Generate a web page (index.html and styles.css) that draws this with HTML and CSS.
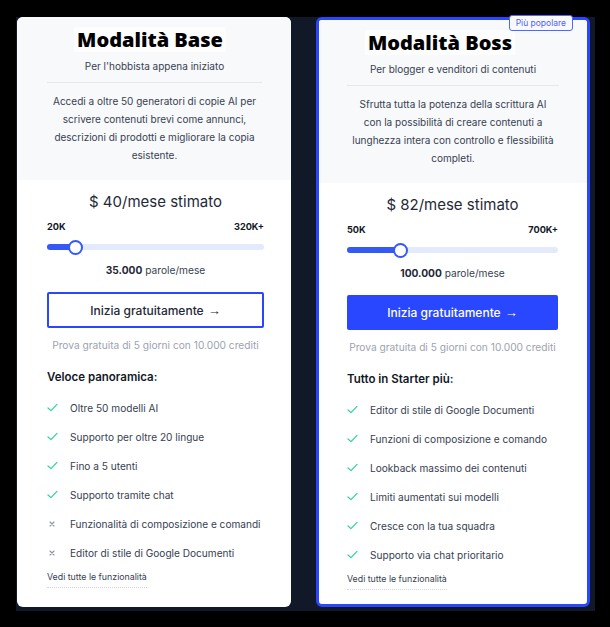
FILE: index.html
```html
<!DOCTYPE html>
<html lang="it">
<head>
<meta charset="utf-8">
<title>Piani</title>
<link rel="stylesheet" href="styles.css">
</head>
<body>
<div class="frame">
  <section class="card">
    <div class="card-head">
      <h2 class="title title-base"><span>Modalità Base</span></h2>
      <p class="subtitle">Per l'hobbista appena iniziato</p>
      <hr class="divider">
      <p class="desc">Accedi a oltre 50 generatori di copie AI per<br>scrivere contenuti brevi come annunci,<br>descrizioni di prodotti e migliorare la copia<br>esistente.</p>
    </div>
    <div class="card-body">
      <p class="price">$ 40/mese stimato</p>
      <div class="range-labels"><span>20K</span><span>320K+</span></div>
      <div class="slider">
        <div class="track"><div class="fill" style="width:28px"></div><div class="thumb" style="left:28px"></div></div>
      </div>
      <p class="words"><b>35.000</b> parole/mese</p>
      <a class="btn btn-outline" href="#">Inizia gratuitamente <span class="arrow">→</span></a>
      <p class="trial">Prova gratuita di 5 giorni con 10.000 crediti</p>
      <h3 class="list-title">Veloce panoramica:</h3>
      <ul class="features">
        <li><span class="ic check"><svg viewBox="0 0 12 10"><polyline points="1,5.5 4.3,8.5 11,1.5"/></svg></span>Oltre 50 modelli AI</li>
        <li><span class="ic check"><svg viewBox="0 0 12 10"><polyline points="1,5.5 4.3,8.5 11,1.5"/></svg></span>Supporto per oltre 20 lingue</li>
        <li><span class="ic check"><svg viewBox="0 0 12 10"><polyline points="1,5.5 4.3,8.5 11,1.5"/></svg></span>Fino a 5 utenti</li>
        <li><span class="ic check"><svg viewBox="0 0 12 10"><polyline points="1,5.5 4.3,8.5 11,1.5"/></svg></span>Supporto tramite chat</li>
        <li><span class="ic cross"><svg viewBox="0 0 10 10"><path d="M3,3 L7,7 M7,3 L3,7"/></svg></span>Funzionalità di composizione e comandi</li>
        <li><span class="ic cross"><svg viewBox="0 0 10 10"><path d="M3,3 L7,7 M7,3 L3,7"/></svg></span>Editor di stile di Google Documenti</li>
      </ul>
      <a class="more" href="#">Vedi tutte le funzionalità</a>
    </div>
  </section>

  <section class="card card-featured">
    <span class="badge">Più popolare</span>
    <div class="card-head">
      <h2 class="title title-boss"><span>Modalità Boss</span></h2>
      <p class="subtitle">Per blogger e venditori di contenuti</p>
      <hr class="divider">
      <p class="desc">Sfrutta tutta la potenza della scrittura AI<br>con la possibilità di creare contenuti a<br>lunghezza intera con controllo e flessibilità<br>completi.</p>
    </div>
    <div class="card-body">
      <p class="price">$ 82/mese stimato</p>
      <div class="range-labels"><span>50K</span><span>700K+</span></div>
      <div class="slider">
        <div class="track"><div class="fill" style="width:53px"></div><div class="thumb" style="left:53px"></div></div>
      </div>
      <p class="words"><b>100.000</b> parole/mese</p>
      <a class="btn btn-solid" href="#">Inizia gratuitamente <span class="arrow">→</span></a>
      <p class="trial">Prova gratuita di 5 giorni con 10.000 crediti</p>
      <h3 class="list-title">Tutto in Starter più:</h3>
      <ul class="features">
        <li><span class="ic check"><svg viewBox="0 0 12 10"><polyline points="1,5.5 4.3,8.5 11,1.5"/></svg></span>Editor di stile di Google Documenti</li>
        <li><span class="ic check"><svg viewBox="0 0 12 10"><polyline points="1,5.5 4.3,8.5 11,1.5"/></svg></span>Funzioni di composizione e comando</li>
        <li><span class="ic check"><svg viewBox="0 0 12 10"><polyline points="1,5.5 4.3,8.5 11,1.5"/></svg></span>Lookback massimo dei contenuti</li>
        <li><span class="ic check"><svg viewBox="0 0 12 10"><polyline points="1,5.5 4.3,8.5 11,1.5"/></svg></span>Limiti aumentati sui modelli</li>
        <li><span class="ic check"><svg viewBox="0 0 12 10"><polyline points="1,5.5 4.3,8.5 11,1.5"/></svg></span>Cresce con la tua squadra</li>
        <li><span class="ic check"><svg viewBox="0 0 12 10"><polyline points="1,5.5 4.3,8.5 11,1.5"/></svg></span>Supporto via chat prioritario</li>
      </ul>
      <a class="more" href="#">Vedi tutte le funzionalità</a>
    </div>
  </section>
</div>
</body>
</html>
```

FILE: styles.css
```css
* { box-sizing: border-box; }
html, body { margin: 0; padding: 0; }
body {
  background: #000;
  font-family: Inter, "Liberation Sans", sans-serif;
  color: #1f2937;
  width: 610px;
  height: 627px;
  overflow: hidden;
}
p, h2, h3, ul { margin: 0; padding: 0; }

.frame {
  margin: 17px 0 0 16px;
  width: 579px;
  height: 594px;
  background: #111827;
  padding: 0 5px 4px 1px;
  display: flex;
  gap: 25px;
  align-items: stretch;
}

.card {
  position: relative;
  width: 274px;
  background: #fff;
  border-radius: 6px;
  display: flex;
  flex-direction: column;
  overflow: visible;
}
.card-featured {
  border: 3px solid #2947ff;
}

.card-head {
  background: #f8f9fb;
  border-radius: 6px 6px 0 0;
  padding: 10px 29px 16px 30px;
  text-align: center;
}
.card-featured .card-head { padding: 10px 28px 16px 28px; border-radius: 3px 3px 0 0; }

.title {
  font-family: "Open Sans", sans-serif;
  font-weight: 800;
  font-size: 20px;
  line-height: 25px;
  color: #000;
}
.title span {
  display: inline-block;
  background: #fdfdfe;
  padding: 0 3px;
}
.title-base { margin-right: 9px; }
.title-boss { margin-right: 26px; }

.subtitle {
  margin-top: 6px;
  font-size: 10px;
  line-height: 16px;
  color: #374151;
}
.divider {
  margin: 8px 0 0;
  border: 0;
  height: 1px;
  background: #e5e7eb;
}
.desc {
  margin-top: 9px;
  font-size: 10px;
  line-height: 18px;
  color: #374151;
}

.card-body {
  flex: 1;
  padding: 11px 27px 0 30px;
  display: flex;
  flex-direction: column;
}
.card-featured .card-body { padding: 11px 29px 0 28px; }

.price {
  text-align: center;
  font-size: 15px;
  line-height: 22px;
  color: #1f2937;
}
.range-labels {
  margin-top: 7px;
  display: flex;
  justify-content: space-between;
  font-size: 9.2px;
  font-weight: 700;
  line-height: 14px;
  color: #111827;
}
.slider {
  margin-top: 5px;
  height: 16px;
  display: flex;
  align-items: center;
}
.track {
  position: relative;
  width: 100%;
  height: 6px;
  border-radius: 3px;
  background: #e3eafb;
}
.fill {
  height: 6px;
  border-radius: 3px;
  background: #3559f5;
}
.thumb {
  position: absolute;
  top: 50%;
  width: 15px;
  height: 15px;
  margin: -7.5px 0 0 -7.5px;
  border-radius: 50%;
  background: #fff;
  border: 2px solid #3559f5;
}
.words {
  margin-top: 7px;
  text-align: center;
  font-size: 10.2px;
  line-height: 16px;
  color: #374151;
}
.words b { color: #1f2937; font-weight: 700; }

.btn {
  margin-top: 14px;
  height: 36px;
  display: flex;
  align-items: center;
  justify-content: center;
  gap: 4px;
  font-size: 12px;
  font-weight: 500;
  text-decoration: none;
  border-radius: 2px;
}
.arrow {
  font-family: "Liberation Sans", sans-serif;
  font-weight: 400;
  font-size: 13px;
}
.btn-outline {
  border: 2px solid #2947ff;
  color: #1f2937;
  background: #fff;
}
.btn-solid {
  background: #2947ff;
  color: #fff;
  height: 35px;
}
.trial {
  margin-top: 9px;
  text-align: center;
  font-size: 10.2px;
  line-height: 16px;
  color: #9ca3af;
}
.list-title {
  margin-top: 15px;
  font-size: 11.5px;
  font-weight: 600;
  line-height: 18px;
  color: #111827;
}
.features {
  list-style: none;
  margin-top: 7px;
}
.features li {
  display: flex;
  align-items: center;
  height: 29px;
  font-size: 10.1px;
  color: #374151;
}
.ic {
  width: 23px;
  flex: none;
  display: flex;
  align-items: center;
}
.ic svg { display: block; fill: none; stroke-linecap: round; stroke-linejoin: round; }
.check svg { width: 11px; height: 9px; stroke: #34d399; stroke-width: 1.4; }
.cross svg { width: 10px; height: 10px; stroke: #8b93a8; stroke-width: 1.1; }

.more {
  align-self: flex-start;
  margin-top: 3px;
  font-size: 8.8px;
  line-height: 13px;
  padding-bottom: 4px;
  color: #374151;
  text-decoration: none;
  border-bottom: 1px dotted #d1d5db;
}

.badge {
  position: absolute;
  top: -5px;
  right: 14px;
  height: 16px;
  padding: 0 6px;
  display: flex;
  align-items: center;
  background: #f8f9ff;
  border: 1px solid #4d68ff;
  border-radius: 3px;
  font-size: 8.5px;
  color: #4d63f0;
  z-index: 2;
}
```
